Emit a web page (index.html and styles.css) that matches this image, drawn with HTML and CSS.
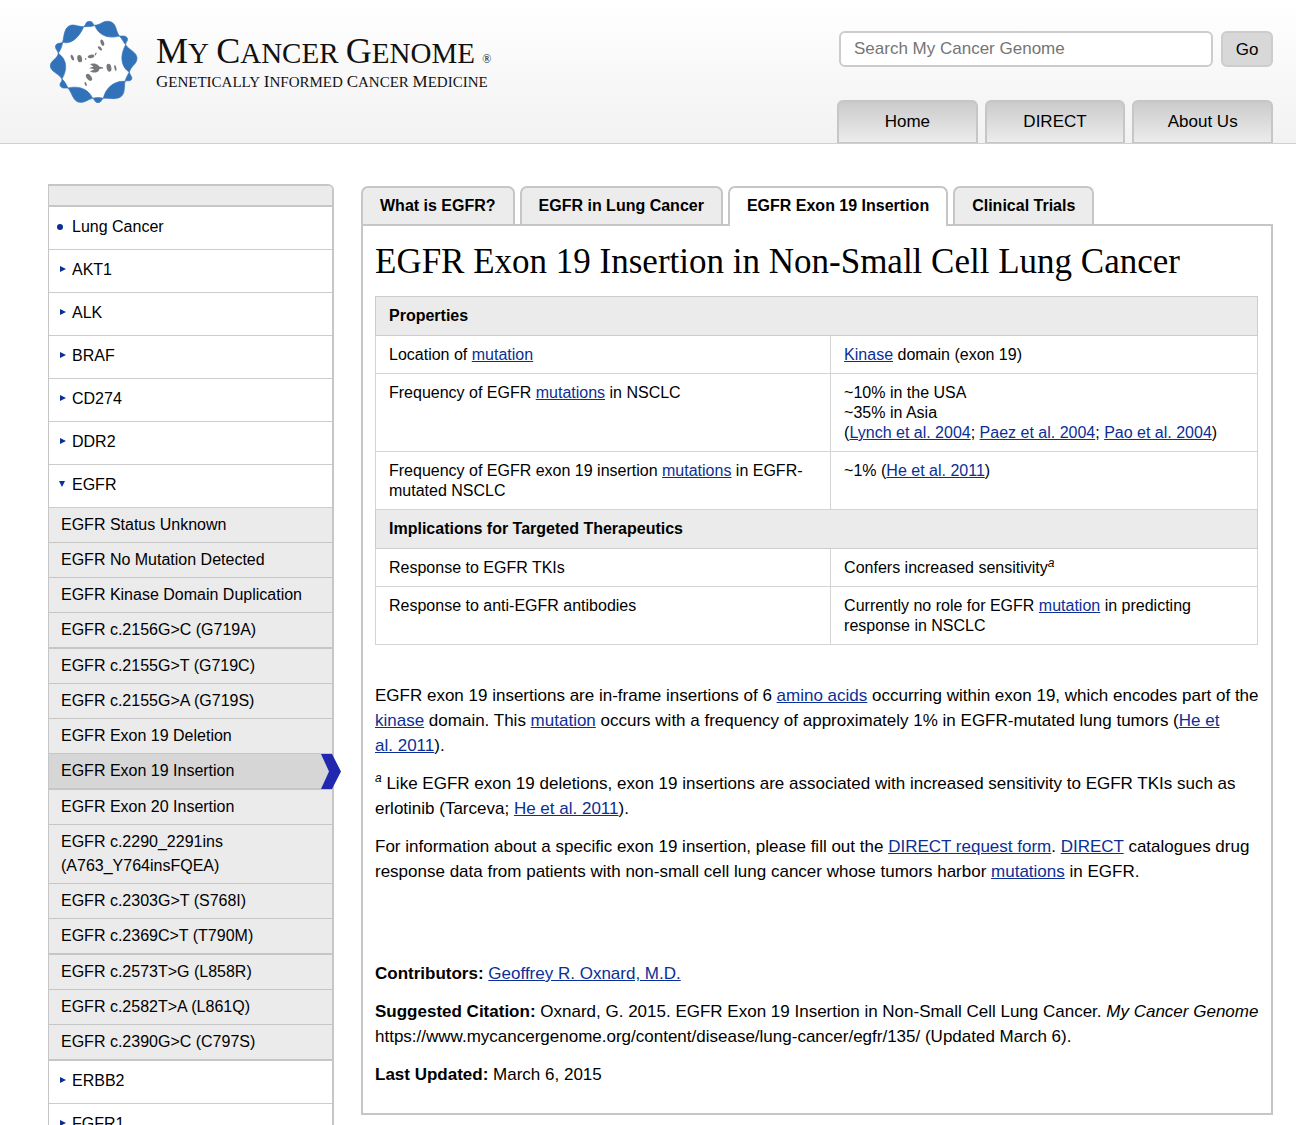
FILE: index.html
```html
<!DOCTYPE html>
<html lang="en">
<head>
<meta charset="utf-8">
<meta name="viewport" content="width=device-width, initial-scale=1">
<title>EGFR Exon 19 Insertion in Non-Small Cell Lung Cancer - My Cancer Genome</title>
<link rel="stylesheet" href="styles.css">
</head>
<body>
<header class="site-header">
  <a class="brand" href="#">
    <svg class="brand-mark" viewBox="24 24 276 264" aria-hidden="true">
      <path fill="#fff" d="M131 50L164 45L238 78L254 103L268 183L257 213L190 265L158 265L84 234L66 208L56 132L71 99Z"/>
      <g fill="#3272b8" stroke="#3272b8" stroke-width="2">
        <path d="M131 50C110 49 104 43 92 46C72 52 73 76 68 97C91 104 117 85 131 50Z"/>
        <path d="M131 50C138 46 136 34 148 34C160 34 158 44 164 46C155 51 143 50 131 50Z"/>
        <path d="M164 46C182 45 188 32 206 34C230 37 226 61 238 78C211 86 178 81 164 46Z"/>
        <path d="M238 78C246 79 258 75 262 85C265 94 256 96 257 104C250 98 247 86 238 78Z"/>
        <path d="M257 104C265 119 290 125 291 144C291 163 274 166 268 186C247 174 236 143 257 104Z"/>
        <path d="M268 186C269 195 278 200 275 208C271 216 261 210 255 214C258 204 262 196 268 186Z"/>
        <path d="M255 214C252 232 256 253 240 262C222 270 209 263 190 265C196 236 221 211 255 214Z"/>
        <path d="M190 265C184 268 185 278 174 278C163 278 165 268 158 265C168 262 180 262 190 265Z"/>
        <path d="M158 265C145 267 136 279 119 277C98 274 97 249 84 234C111 227 144 233 158 265Z"/>
        <path d="M84 234C75 234 64 237 60 226C59 218 67 215 66 207C74 213 79 224 84 234Z"/>
        <path d="M66 207C57 190 32 186 31 168C31 151 51 149 55 130C84 151 81 181 66 207Z"/>
        <path d="M55 130C53 121 44 117 47 106C52 98 61 101 68 97C67 108 61 120 55 130Z"/>
      </g>
      <g fill="#77787b">
        <ellipse cx="187" cy="98" rx="5" ry="10" transform="rotate(-18 187 98)"/>
        <ellipse cx="180" cy="115" rx="4" ry="8" transform="rotate(-45 180 115)"/>
        <ellipse cx="97" cy="143" rx="4" ry="9" transform="rotate(-25 97 143)"/>
        <ellipse cx="119" cy="146" rx="7" ry="11" transform="rotate(-12 119 146)"/>
        <ellipse cx="137" cy="147" rx="2" ry="3"/>
        <ellipse cx="153" cy="139" rx="10" ry="5" transform="rotate(-12 153 139)"/>
        <ellipse cx="167" cy="132" rx="2" ry="5" transform="rotate(25 167 132)"/>
        <path d="M150 162C156 159 170 160 174 165C176 170 181 171 189 172V176C182 175 177 177 176 183C169 189 157 189 150 184C155 182 160 181 162 178C156 176 153 174 148 176C151 171 156 171 160 170C157 167 153 165 150 162Z"/>
        <ellipse cx="207" cy="173" rx="7" ry="12" transform="rotate(-12 207 173)"/>
        <ellipse cx="226" cy="174" rx="3" ry="9" transform="rotate(-12 226 174)"/>
        <ellipse cx="147" cy="202" rx="7" ry="12" transform="rotate(-38 147 202)"/>
        <ellipse cx="137" cy="222" rx="3" ry="6" transform="rotate(-20 137 222)"/>
      </g>
    </svg>
    <span class="brand-text">
      <span class="brand-name"><span class="cap">My</span> <span class="cap">Cancer</span> <span class="cap">Genome</span> <span class="reg">®</span></span>
      <span class="brand-tag"><span class="cap">Genetically</span> <span class="cap">Informed</span> <span class="cap">Cancer</span> <span class="cap">Medicine</span></span>
    </span>
  </a>
  <div class="header-tools">
    <form class="search" role="search">
      <input class="search-box" type="search" aria-label="Search My Cancer Genome" placeholder="Search My Cancer Genome">
      <button class="search-go" type="button">Go</button>
    </form>
    <nav class="main-nav" aria-label="Main">
      <a href="#">Home</a>
      <a href="#">DIRECT</a>
      <a href="#">About Us</a>
    </nav>
  </div>
</header>

<div class="page">
  <nav class="sidebar" aria-label="Cancer genes">
    <div class="sidebar-cap"></div>
    <ul class="genes">
      <li><a class="gene current" href="#">Lung Cancer</a></li>
      <li><a class="gene" href="#">AKT1</a></li>
      <li><a class="gene" href="#">ALK</a></li>
      <li><a class="gene" href="#">BRAF</a></li>
      <li><a class="gene" href="#">CD274</a></li>
      <li><a class="gene" href="#">DDR2</a></li>
      <li>
        <a class="gene open" href="#">EGFR</a>
        <ul class="variants">
          <li><a href="#">EGFR Status Unknown</a></li>
          <li><a href="#">EGFR No Mutation Detected</a></li>
          <li><a href="#">EGFR Kinase Domain Duplication</a></li>
          <li><a href="#">EGFR c.2156G&gt;C (G719A)</a></li>
          <li><a href="#">EGFR c.2155G&gt;T (G719C)</a></li>
          <li><a href="#">EGFR c.2155G&gt;A (G719S)</a></li>
          <li><a href="#">EGFR Exon 19 Deletion</a></li>
          <li class="selected"><a href="#" aria-current="page">EGFR Exon 19 Insertion</a>
            <svg class="pointer" viewBox="0 0 20 35" aria-hidden="true"><path fill="#2227b0" d="M0 0H11L20 17.500L11 35H0L8 17.500Z"/></svg></li>
          <li><a href="#">EGFR Exon 20 Insertion</a></li>
          <li><a href="#">EGFR c.2290_2291ins<br>(A763_Y764insFQEA)</a></li>
          <li><a href="#">EGFR c.2303G&gt;T (S768I)</a></li>
          <li><a href="#">EGFR c.2369C&gt;T (T790M)</a></li>
          <li><a href="#">EGFR c.2573T&gt;G (L858R)</a></li>
          <li><a href="#">EGFR c.2582T&gt;A (L861Q)</a></li>
          <li><a href="#">EGFR c.2390G&gt;C (C797S)</a></li>
        </ul>
      </li>
      <li><a class="gene" href="#">ERBB2</a></li>
      <li><a class="gene" href="#">FGFR1</a></li>
    </ul>
  </nav>

  <main class="content">
    <nav class="tabs" aria-label="Topic">
      <a href="#">What is EGFR?</a>
      <a href="#">EGFR in Lung Cancer</a>
      <a class="active" href="#" aria-current="page">EGFR Exon 19 Insertion</a>
      <a href="#">Clinical Trials</a>
    </nav>
    <article class="panel">
      <h1>EGFR Exon 19 Insertion in Non-Small Cell Lung Cancer</h1>
      <table class="facts">
        <colgroup><col class="col-name"><col></colgroup>
        <tbody>
          <tr><th colspan="2">Properties</th></tr>
          <tr><td>Location of <a href="#">mutation</a></td><td><a href="#">Kinase</a> domain (exon 19)</td></tr>
          <tr><td>Frequency of EGFR <a href="#">mutations</a> in NSCLC</td><td>~10% in the USA<br>~35% in Asia<br>(<a href="#">Lynch et al. 2004</a>; <a href="#">Paez et al. 2004</a>; <a href="#">Pao et al. 2004</a>)</td></tr>
          <tr><td>Frequency of EGFR exon 19 insertion <a href="#">mutations</a> in EGFR-mutated NSCLC</td><td>~1% (<a href="#">He et al. 2011</a>)</td></tr>
          <tr><th colspan="2">Implications for Targeted Therapeutics</th></tr>
          <tr><td>Response to EGFR TKIs</td><td>Confers increased sensitivity<sup>a</sup></td></tr>
          <tr><td>Response to anti-EGFR antibodies</td><td>Currently no role for EGFR <a href="#">mutation</a> in predicting response in NSCLC</td></tr>
        </tbody>
      </table>
      <p>EGFR exon 19 insertions are in-frame insertions of 6 <a href="#">amino acids</a> occurring within exon 19, which encodes part of the <a href="#">kinase</a> domain. This <a href="#">mutation</a> occurs with a frequency of approximately 1% in EGFR-mutated lung tumors (<a href="#">He et al.&nbsp;2011</a>).</p>
      <p><sup>a</sup> Like EGFR exon 19 deletions, exon 19 insertions are associated with increased sensitivity to EGFR TKIs such as erlotinib (Tarceva; <a href="#">He et al. 2011</a>).</p>
      <p>For information about a specific exon 19 insertion, please fill out the <a href="#">DIRECT request form</a>. <a href="#">DIRECT</a> catalogues drug response data from patients with non-small cell lung cancer whose tumors harbor <a href="#">mutations</a> in EGFR.</p>
      <footer class="credits">
        <p><strong>Contributors:</strong> <a href="#">Geoffrey R. Oxnard, M.D.</a></p>
        <p><strong>Suggested Citation:</strong> Oxnard, G. 2015. EGFR Exon 19 Insertion in Non-Small Cell Lung Cancer. <em>My Cancer Genome</em> https://www.mycancergenome.org/content/disease/lung-cancer/egfr/135/ (Updated March 6).</p>
        <p><strong>Last Updated:</strong> March 6, 2015</p>
      </footer>
    </article>
  </main>
</div>
</body>
</html>
```
FILE: styles.css
```css
* { box-sizing: border-box; }

body {
  margin: 0;
  background: #fff;
  color: #000;
  font: 17px/25px "Liberation Sans", Arial, sans-serif;
}

a { color: #0b2f96; }

ul { margin: 0; padding: 0; list-style: none; }

/* Header */
.site-header {
  display: flex;
  justify-content: space-between;
  padding: 18px 23px 0 48px;
  border-bottom: 1px solid #d0d0d0;
  background: linear-gradient(#fff, #f2f2f2);
}

.brand {
  display: flex;
  gap: 16px;
  color: #111;
  font-family: "Liberation Serif", "Times New Roman", serif;
  text-decoration: none;
  text-transform: uppercase;
  white-space: nowrap;
}

.brand-mark { width: 92px; height: 88px; }

.brand-text { padding-top: 18px; }

.brand-name, .brand-tag { display: block; }

.brand-name { font-size: 29px; line-height: 30px; }
.brand-tag { font-size: 15px; line-height: 16px; }

.cap { display: inline-block; }
.brand-name .cap::first-letter { font-size: 36px; }
.brand-tag .cap::first-letter { font-size: 17px; }

.reg { font-size: 12px; }

.header-tools {
  display: flex;
  flex-direction: column;
  justify-content: space-between;
  width: 436px;
  height: 125px;
  padding-top: 13px;
}

.search { display: flex; gap: 8px; padding-left: 2px; }

.search-box, .search-go {
  height: 36px;
  border: 2px solid #ccc;
  border-radius: 6px;
  color: #000;
  font: inherit;
}

.search-box {
  flex: 1;
  min-width: 0;
  padding: 0 13px;
  background: #fff;
  appearance: none;
}

.search-box::placeholder { color: #757575; opacity: 1; }

.search-go {
  width: 52px;
  padding: 0;
  background: #d8d8d8;
}

.main-nav { display: flex; gap: 7px; }

.main-nav a {
  flex: 1;
  padding: 7px 0 8px;
  border: 2px solid #c6c6c6;
  border-bottom-width: 1px;
  border-radius: 6px 6px 0 0;
  background: linear-gradient(#cbcbcb, #ececec);
  color: #000;
  line-height: 25px;
  text-align: center;
  text-decoration: none;
}

/* Columns */
.page {
  display: flex;
  align-items: flex-start;
  gap: 27px;
  padding: 40px 23px 0 48px;
}

/* Sidebar */
.sidebar {
  flex: none;
  width: 286px;
  border: 1px solid #c6c6c6;
  border-right-width: 2px;
  border-top-width: 2px;
  border-radius: 0 6px 0 0;
  font-size: 16px;
  line-height: 24px;
}

.sidebar-cap {
  height: 21px;
  border-bottom: 2px solid #c6c6c6;
  border-radius: 0 4px 0 0;
  background: #ebebeb;
}

.sidebar a { display: block; color: #000; text-decoration: none; }

.sidebar .gene {
  position: relative;
  padding: 8px 8px 10px 23px;
  border-bottom: 1px solid #ccc;
}

.gene::before {
  content: "";
  position: absolute;
  top: 16px;
  left: 11px;
  border: 3px solid transparent;
  border-left: 6px solid #0b2f96;
  border-right-width: 0;
}

.gene.current::before {
  top: 17px;
  left: 8px;
  width: 6px;
  height: 6px;
  border: 0;
  border-radius: 50%;
  background: #0b2f96;
}

.gene.open::before {
  left: 10px;
  border: 3px solid transparent;
  border-top: 6px solid #0b2f96;
  border-bottom-width: 0;
}

.variants li {
  position: relative;
  border-bottom: 1px solid #c6c6c6;
  background: #ebebeb;
}

.variants li:nth-child(4n), .variants li:last-child { border-bottom-width: 2px; }

.variants a { padding: 5px 8px 5px 12px; }

.variants .selected { background: #d6d6d6; }

.pointer {
  position: absolute;
  top: 0;
  right: -9px;
  width: 20px;
  height: 35px;
}

/* Tabs and panel */
.content { flex: 1; min-width: 0; padding-top: 2px; }

.tabs { display: flex; gap: 5px; }

.tabs a {
  padding: 5px 17px 6px;
  border: 2px solid #c6c6c6;
  border-bottom: 0;
  border-radius: 7px 7px 0 0;
  background: #ececec;
  color: #000;
  font-size: 16px;
  font-weight: bold;
  text-decoration: none;
}

.tabs .active {
  z-index: 1;
  margin-bottom: -2px;
  background: #fff;
}

.panel {
  padding: 15px 13px 13px 12px;
  border: 2px solid #c6c6c6;
}

h1 {
  margin: 0 0 13px;
  font: 35px/42px "Liberation Serif", "Times New Roman", serif;
}

.facts {
  width: 100%;
  margin-bottom: 38px;
  border-collapse: collapse;
  table-layout: fixed;
  font-size: 16px;
  line-height: 20px;
}

.col-name { width: 51.6%; }

.facts th, .facts td {
  padding: 9px 13px 8px;
  border: 1px solid #ccc;
  text-align: left;
  vertical-align: top;
}

.facts td { border-color: #d4d4d4; }

.facts th { padding-bottom: 9px; background: #ebebeb; }

/* Running text reaches a little past the table's right edge */
.panel p { margin: 0 -8px 13px 0; }

.credits { padding-top: 64px; }

sup { font-size: 12px; font-style: italic; line-height: 0; }
```
